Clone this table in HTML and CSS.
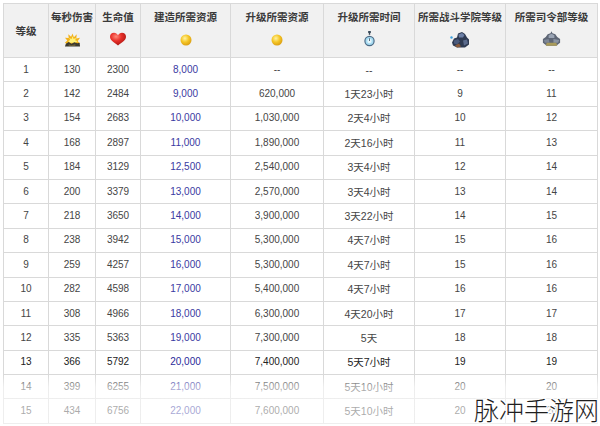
FILE: index.html
```html
<!DOCTYPE html>
<html lang="zh">
<head>
<meta charset="utf-8">
<link rel="stylesheet" href="styles.css">
</head>
<body>
<div class="page">
  <table class="levels">
    <colgroup>
      <col class="c1"><col class="c2"><col class="c3"><col class="c4"><col class="c5"><col class="c6"><col class="c7"><col class="c8">
    </colgroup>
    <thead>
      <tr>
        <th>等级</th>
        <th><div class="ht">每秒伤害</div>
          <svg class="ico" width="17" height="16" viewBox="0 0 18 16">
            <polygon points="9,1 10.5,5 13.5,2 13,6.5 17,5.5 14.5,9 17,12 4,13 1,11 3.5,8.5 1,5.5 5,6 4.5,2 7.5,4.5" fill="#f2b21a"/>
            <polygon points="9,4 10.3,7 12.5,5.5 12,8.5 14.5,9 12,11 6,11 4.5,9 6.5,8 5.5,6 8,7" fill="#fff27a"/>
            <path d="M2 12 L5 10 L8 12 L11 10.5 L14 11.5 L16.5 11 L17 15 L1 15 Z" fill="#3b3a30"/>
            <path d="M5 12.5 L8 13.5 L12 12.5 L12 14 L5 14 Z" fill="#7a6a3a"/>
          </svg>
        </th>
        <th><div class="ht">生命值</div>
          <svg class="ico" width="18" height="14" viewBox="0 0 18 14">
            <defs><radialGradient id="hg" cx="0.38" cy="0.3" r="0.75"><stop offset="0" stop-color="#ff8a7a"/><stop offset="0.45" stop-color="#e8302a"/><stop offset="1" stop-color="#a3140f"/></radialGradient></defs>
            <path d="M9 13.5 C5 10.5 1 8.3 1 4.8 C1 2.4 2.8 0.8 5 0.8 C6.8 0.8 8.1 1.8 9 3.2 C9.9 1.8 11.2 0.8 13 0.8 C15.2 0.8 17 2.4 17 4.8 C17 8.3 13 10.5 9 13.5 Z" fill="url(#hg)"/>
          </svg>
        </th>
        <th><div class="ht">建造所需资源</div>
          <svg class="ico coin" width="12" height="12" viewBox="0 0 12 12">
            <defs><radialGradient id="cg1" cx="0.4" cy="0.35" r="0.7"><stop offset="0" stop-color="#fff3a0"/><stop offset="0.5" stop-color="#f5c626"/><stop offset="1" stop-color="#d89a10"/></radialGradient></defs>
            <circle cx="6" cy="6" r="5.5" fill="url(#cg1)"/>
          </svg>
        </th>
        <th><div class="ht">升级所需资源</div>
          <svg class="ico coin" width="12" height="12" viewBox="0 0 12 12">
            <defs><radialGradient id="cg2" cx="0.4" cy="0.35" r="0.7"><stop offset="0" stop-color="#fff3a0"/><stop offset="0.5" stop-color="#f5c626"/><stop offset="1" stop-color="#d89a10"/></radialGradient></defs>
            <circle cx="6" cy="6" r="5.5" fill="url(#cg2)"/>
          </svg>
        </th>
        <th><div class="ht">升级所需时间</div>
          <svg class="ico watch" width="11" height="18" viewBox="0 0 11 17">
            <rect x="4" y="0.5" width="3" height="2" rx="0.8" fill="#3a4a5a"/>
            <rect x="4.8" y="2.3" width="1.4" height="2" fill="#3a4a5a"/>
            <circle cx="5.5" cy="10.5" r="5.2" fill="#4b6a86"/>
            <circle cx="5.5" cy="10.5" r="4" fill="#a8dcf2"/>
            <circle cx="5.5" cy="10.5" r="2.2" fill="#e6f6fc"/>
            <path d="M5.5 10.5 L5.5 7.8" stroke="#3a4a5a" stroke-width="0.8"/>
          </svg>
        </th>
        <th><div class="ht">所需战斗学院等级</div>
          <svg class="ico bld" width="22" height="19" viewBox="0 0 22 18">
            <path d="M3 12 L5 8 L8 7 L9 3 L13 1.5 L16 3.5 L18 7 L20 9 L20 14 L16 17 L8 17 L4 15 Z" fill="#2e3a52"/>
            <path d="M9.5 4 L13 2.5 L15.5 4.5 L14 7 L10 7 Z" fill="#6c7fa6"/>
            <path d="M5 10 L9 8.5 L11 11 L8 14 L5 13 Z" fill="#4a5a7c"/>
            <path d="M14 10 L18 9 L19 13 L15 15 Z" fill="#5a6a8c"/>
            <path d="M6 15 L10 13 L12 16 L8 17 Z" fill="#8a5a3a"/>
            <circle cx="2.5" cy="7" r="1.2" fill="#3ca0e0"/>
          </svg>
        </th>
        <th><div class="ht">所需司令部等级</div>
          <svg class="ico bld" width="21" height="18" viewBox="0 0 22 18">
            <path d="M11 1 L12 3 L15 4 L17 7 L20 9 L20 13 L16 16 L6 16 L2 13 L2 9 L5 7 L7 4 L10 3 Z" fill="#5e6675"/>
            <path d="M8 5 L11 3.5 L14 5 L14 8 L8 8 Z" fill="#9aa4b4"/>
            <path d="M3 10 L8 9 L9 13 L4 13 Z" fill="#7d8696"/>
            <path d="M13 9 L19 10 L18 13 L13 13 Z" fill="#8a93a2"/>
            <path d="M6 13 L16 13 L17 16 L5 16 Z" fill="#a89a5a"/>
          </svg>
        </th>
      </tr>
    </thead>
    <tbody>
      <tr><td>1</td><td>130</td><td>2300</td><td class="gold">8,000</td><td>--</td><td>--</td><td>--</td><td>--</td></tr>
      <tr><td>2</td><td>142</td><td>2484</td><td class="gold">9,000</td><td>620,000</td><td>1天23小时</td><td>9</td><td>11</td></tr>
      <tr><td>3</td><td>154</td><td>2683</td><td class="gold">10,000</td><td>1,030,000</td><td>2天4小时</td><td>10</td><td>12</td></tr>
      <tr><td>4</td><td>168</td><td>2897</td><td class="gold">11,000</td><td>1,890,000</td><td>2天16小时</td><td>11</td><td>13</td></tr>
      <tr><td>5</td><td>184</td><td>3129</td><td class="gold">12,500</td><td>2,540,000</td><td>3天4小时</td><td>12</td><td>14</td></tr>
      <tr><td>6</td><td>200</td><td>3379</td><td class="gold">13,000</td><td>2,570,000</td><td>3天4小时</td><td>13</td><td>14</td></tr>
      <tr><td>7</td><td>218</td><td>3650</td><td class="gold">14,000</td><td>3,900,000</td><td>3天22小时</td><td>14</td><td>15</td></tr>
      <tr><td>8</td><td>238</td><td>3942</td><td class="gold">15,000</td><td>5,300,000</td><td>4天7小时</td><td>15</td><td>16</td></tr>
      <tr><td>9</td><td>259</td><td>4257</td><td class="gold">16,000</td><td>5,300,000</td><td>4天7小时</td><td>15</td><td>16</td></tr>
      <tr><td>10</td><td>282</td><td>4598</td><td class="gold">17,000</td><td>5,400,000</td><td>4天7小时</td><td>16</td><td>16</td></tr>
      <tr><td>11</td><td>308</td><td>4966</td><td class="gold">18,000</td><td>6,300,000</td><td>4天20小时</td><td>17</td><td>17</td></tr>
      <tr><td>12</td><td>335</td><td>5363</td><td class="gold">19,000</td><td>7,300,000</td><td>5天</td><td>18</td><td>18</td></tr>
      <tr class="strong"><td>13</td><td>366</td><td>5792</td><td class="gold">20,000</td><td>7,400,000</td><td>5天7小时</td><td>19</td><td>19</td></tr>
      <tr><td>14</td><td>399</td><td>6255</td><td class="gold">21,000</td><td>7,500,000</td><td>5天10小时</td><td>20</td><td>20</td></tr>
      <tr><td>15</td><td>434</td><td>6756</td><td class="gold">22,000</td><td>7,600,000</td><td>5天10小时</td><td>20</td><td>20</td></tr>
    </tbody>
  </table>
  <div class="fade"></div>
  <div class="watermark">脉冲手游网</div>
</div>
</body>
</html>
```

FILE: styles.css
```css
html, body {
  margin: 0;
  padding: 0;
  background: #ffffff;
}
.page {
  position: relative;
  width: 600px;
  height: 426px;
  overflow: hidden;
  padding: 3px 3px 0 3px;
  box-sizing: border-box;
}
.levels {
  border-collapse: collapse;
  table-layout: fixed;
  width: 594px;
  font-family: "Liberation Sans", "Noto Sans CJK SC", sans-serif;
  font-size: 10px;
  color: #454545;
}
.c1 { width: 45px; }
.c2 { width: 47px; }
.c3 { width: 45px; }
.c4 { width: 90px; }
.c5 { width: 93px; }
.c6 { width: 91px; }
.c7 { width: 91px; }
.c8 { width: 92px; }
.levels th, .levels td {
  border: 1px solid #d9d9d9;
  text-align: center;
  padding: 0;
}
.levels th {
  height: 54px;
  box-sizing: border-box;
  background: #f1f1f1;
  font-family: "Noto Sans CJK SC", sans-serif;
  font-weight: 700;
  font-size: 10.5px;
  color: #3a3a3a;
  vertical-align: middle;
}
.levels thead th:not(:first-child) {
  vertical-align: top;
  padding-top: 6px;
}
.ht {
  line-height: 14px;
  height: 14px;
}
.ico {
  display: block;
  margin: 8px auto 0;
}
.ico.coin {
  margin-top: 10px;
}
.ico.watch {
  margin-top: 6px;
}
.ico.bld {
  margin-top: 6px;
}
.levels td {
  height: 23.4px;
  line-height: 12px;
}
.levels td:nth-child(6) {
  font-size: 10.5px;
}
.levels td.gold {
  color: #3a3aa2;
}
.levels tr.strong td {
  color: #222;
}
.levels tr.strong td.gold {
  color: #2a2a9a;
}
.fade {
  position: absolute;
  left: 0;
  right: 0;
  top: 375px;
  bottom: 0;
  background: linear-gradient(to bottom, rgba(255,255,255,0) 0, rgba(255,255,255,0.55) 12px, rgba(255,255,255,0.55) 100%);
  pointer-events: none;
}
.watermark {
  position: absolute;
  right: 1px;
  bottom: 3px;
  font-family: "Noto Sans CJK SC", sans-serif;
  font-weight: 300;
  font-size: 25px;
  line-height: 28px;
  color: #1e1e1e;
  text-shadow: 1px 0 0 #fff, -1px 0 0 #fff, 0 1px 0 #fff, 0 -1px 0 #fff, 1px 1px 0 #fff, -1px -1px 0 #fff, 1px -1px 0 #fff, -1px 1px 0 #fff;
}
```
